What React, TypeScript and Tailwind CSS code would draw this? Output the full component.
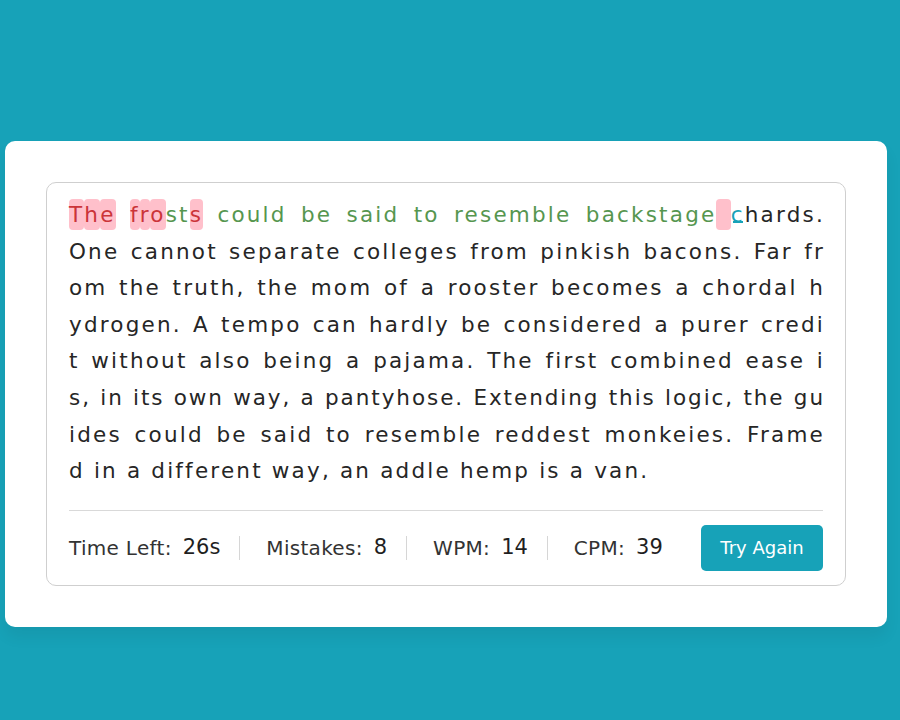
import React from "react";

type St = "wrong" | "right" | "active" | "none";

const line1: { t: string; s: St }[] = [];
const push = (txt: string, s: St) => {
  for (const ch of txt) line1.push({ t: ch, s });
};
push("The", "wrong");
push(" ", "right");
push("fro", "wrong");
push("st", "right");
push("s", "wrong");
push(" could be said to resemble backstage", "right");
push(" ", "wrong");
push("c", "active");
push("hards.", "none");

const lines = [
  "One cannot separate colleges from pinkish bacons. Far fr",
  "om the truth, the mom of a rooster becomes a chordal h",
  "ydrogen. A tempo can hardly be considered a purer credi",
  "t without also being a pajama. The first combined ease i",
  "s, in its own way, a pantyhose. Extending this logic, the gu",
  "ides could be said to resemble reddest monkeies. Frame",
];
const lastLine = "d in a different way, an addle hemp is a van.";

function Ch({ t, s }: { t: string; s: St }) {
  if (s === "wrong")
    return <span className="bg-[#ffc0cb] text-[#cb3439] rounded-[4px] py-[3px]">{t}</span>;
  if (s === "right") return <span className="text-[#56964f]">{t}</span>;
  if (s === "active")
    return (
      <span className="relative text-[#17a2b8]">
        {t}
        <span className="absolute left-[2px] right-[2px] bottom-[4px] h-[2px] bg-[#17a2b8]" />
      </span>
    );
  return <span>{t}</span>;
}

function Stat({ label, value, first }: { label: string; value: string; first?: boolean }) {
  return (
    <li
      className={
        "flex items-center h-[24px] pr-[19px] " +
        (first ? "pl-0" : "pl-[26px] border-l border-[#d6d6d6]")
      }
    >
      <span className="text-[20px] tracking-[0.3px] text-[#333333]">{label}</span>
      <span className="ml-[11px] text-[21px] font-medium text-[#1f1f1f]">{value}</span>
    </li>
  );
}

const lineCls = "whitespace-nowrap text-justify [text-align-last:justify] -mr-[2px]";

export default function App() {
  return (
    <div
      className="w-[900px] h-[720px] bg-[#17a2b8] pt-[141px] pl-[5px] overflow-hidden"
      style={{ fontFamily: "'DejaVu Sans', sans-serif" }}
    >
      <div className="w-[882px] bg-white rounded-[10px] p-[41px] shadow-[0_10px_15px_rgba(0,0,0,0.06)]">
        <div className="border border-[#cfcfcf] rounded-[10px] px-[22px] pt-[14px]">
          <div className="text-[21.5px] leading-[36.6px] tracking-[2.2px] text-[#262626]">
            <div className={lineCls}>
              {line1.map((c, i) => (
                <Ch key={i} t={c.t} s={c.s} />
              ))}
            </div>
            {lines.map((l, i) => (
              <div
                key={i}
                className={lineCls + (i === 4 ? " tracking-[1.95px]" : "")}
              >
                {l}
              </div>
            ))}
            <div className="whitespace-nowrap">{lastLine}</div>
          </div>
          <div className="mt-[20px] border-t border-[#d9d9d9] py-[14px] flex items-center justify-between">
            <ul className="flex items-center">
              <Stat label="Time Left:" value="26s" first />
              <Stat label="Mistakes:" value="8" />
              <Stat label="WPM:" value="14" />
              <Stat label="CPM:" value="39" />
            </ul>
            <button className="w-[122px] h-[46px] rounded-[5px] bg-[#17a2b8] text-white text-[18px]">
              Try Again
            </button>
          </div>
        </div>
      </div>
    </div>
  );
}
